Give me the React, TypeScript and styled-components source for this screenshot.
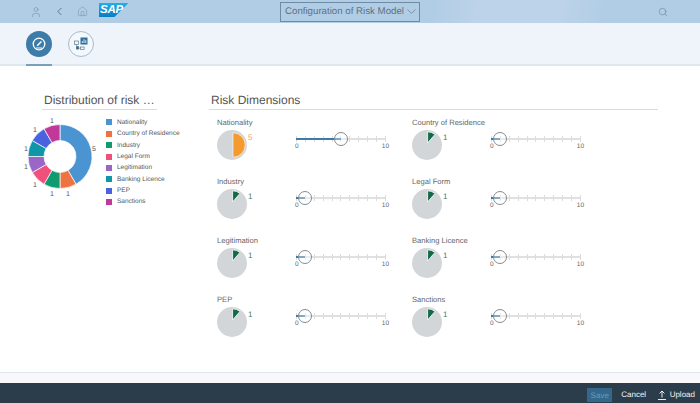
import React from "react";
import styled, { createGlobalStyle } from "styled-components";
import { ChevronDown, ChevronLeft, Home, Search, User } from "lucide-react";

const GlobalStyle = createGlobalStyle`
  html, body { margin: 0; padding: 0; background: #fff; }
  body {
    font-family: "Liberation Sans", Arial, sans-serif;
    text-rendering: geometricPrecision;
  }
`;

const legend = [
  { name: "Nationality", color: "#4a94d2", value: 5 },
  { name: "Country of Residence", color: "#ee7340", value: 1 },
  { name: "Industry", color: "#0f9a70", value: 1 },
  { name: "Legal Form", color: "#f0507c", value: 1 },
  { name: "Legitimation", color: "#9a66c8", value: 1 },
  { name: "Banking Licence", color: "#0f97a8", value: 1 },
  { name: "PEP", color: "#4a62e0", value: 1 },
  { name: "Sanctions", color: "#c0399a", value: 1 },
];

const donutLabels = [
  { x: 74, y: 62.5, t: "5" },
  { x: 48, y: 107.5, t: "1" },
  { x: 32, y: 107.5, t: "1" },
  { x: 15, y: 98.5, t: "1" },
  { x: 6, y: 80.5, t: "1" },
  { x: 6, y: 62.5, t: "1" },
  { x: 15, y: 43.5, t: "1" },
  { x: 32, y: 34.5, t: "1" },
];

const dimensions = [
  { name: "Nationality", value: 5 },
  { name: "Country of Residence", value: 1 },
  { name: "Industry", value: 1 },
  { name: "Legal Form", value: 1 },
  { name: "Legitimation", value: 1 },
  { name: "Banking Licence", value: 1 },
  { name: "PEP", value: 1 },
  { name: "Sanctions", value: 1 },
];

const polar = (cx: number, cy: number, r: number, deg: number) => {
  const a = ((deg - 90) * Math.PI) / 180;
  return [cx + r * Math.cos(a), cy + r * Math.sin(a)];
};

const ringPath = (cx: number, cy: number, R: number, r: number, from: number, to: number) => {
  const [x1, y1] = polar(cx, cy, R, from);
  const [x2, y2] = polar(cx, cy, R, to);
  const [x3, y3] = polar(cx, cy, r, to);
  const [x4, y4] = polar(cx, cy, r, from);
  const large = to - from > 180 ? 1 : 0;
  return `M${x1} ${y1}A${R} ${R} 0 ${large} 1 ${x2} ${y2}L${x3} ${y3}A${r} ${r} 0 ${large} 0 ${x4} ${y4}Z`;
};

const Donut = () => {
  let angle = 0;
  return (
    <DonutSvg viewBox="0 0 80 110">
      {legend.map((l) => {
        const from = angle;
        angle += (l.value / 12) * 360;
        return (
          <path
            key={l.name}
            d={ringPath(40, 68.5, 32, 16, from, angle)}
            fill={l.color}
            stroke="#fff"
            strokeWidth="0.7"
          />
        );
      })}
      {donutLabels.map((d, i) => (
        <text key={i} x={d.x} y={d.y} fontSize="7" fill="#555" textAnchor="middle" fontFamily="Liberation Sans">
          {d.t}
        </text>
      ))}
    </DonutSvg>
  );
};

const ScorePie = ({ value }: { value: number }) => (
  <svg width="30" height="30" viewBox="0 0 30 30">
    <circle cx="15" cy="15" r="15" fill="#d2d6d8" />
    {value === 5 ? (
      <path d="M16 2.8A12.2 12.2 0 0 1 16 27.2Z" fill="#f59a2e" stroke="#fff" strokeWidth="0.6" />
    ) : (
      <path d="M15.6 13V1.8A11.4 11.4 0 0 1 23 4.4Z" fill="#14694a" stroke="#fff" strokeWidth="0.8" />
    )}
  </svg>
);

const Slider = ({ value }: { value: number }) => (
  <SliderBox>
    <Track>
      {Array.from({ length: 11 }).map((_, i) => (
        <Tick key={i} />
      ))}
      <Fill style={{ width: `${value * 10}%` }} />
      <Handle style={{ left: `${value * 10}%` }} />
    </Track>
    <Scale>
      <span>0</span>
      <span>10</span>
    </Scale>
  </SliderBox>
);

export default function App() {
  return (
    <Page>
      <GlobalStyle />
      <Header>
        <HeaderLeft>
          <HeaderIcon><User size={12} strokeWidth={1.2} /></HeaderIcon>
          <BackIcon><ChevronLeft size={13} strokeWidth={1.4} /></BackIcon>
          <HeaderIcon><Home size={11} strokeWidth={1.2} /></HeaderIcon>
          <Logo>
            <svg width="30" height="14" viewBox="0 0 30 14">
              <defs>
                <linearGradient id="sap" x1="0" y1="0" x2="0" y2="1">
                  <stop offset="0" stopColor="#1fb0ea" />
                  <stop offset="1" stopColor="#0a7cc4" />
                </linearGradient>
              </defs>
              <path d="M0 0H29.5L15.5 14H0Z" fill="url(#sap)" />
            </svg>
            <LogoText>SAP</LogoText>
          </Logo>
        </HeaderLeft>
        <TitleBox>
          Configuration of Risk Model
          <ChevronDown size={15} strokeWidth={1} />
        </TitleBox>
        <HeaderRight>
          <HeaderIcon><Search size={10} strokeWidth={1.3} /></HeaderIcon>
        </HeaderRight>
      </Header>

      <TabBar>
        <Tab $active>
          <TabCircle $active>
            <svg width="14" height="14" viewBox="0 0 14 14" fill="none" stroke="#fff">
              <circle cx="7" cy="7" r="5.8" strokeWidth="1.3" />
              <path d="M5.2 8.8L9.4 4.4" strokeWidth="1.5" />
              <path d="M4 11h6" strokeWidth="1" />
            </svg>
          </TabCircle>
        </Tab>
        <Tab>
          <TabCircle>
            <svg width="14" height="14" viewBox="0 0 14 14">
              <rect x="6.5" y="0.5" width="7" height="7" fill="#2f6f9e" />
              <path d="M8.3 6V4M10 6V2.2M11.8 6V3.2" stroke="#fff" strokeWidth="0.8" />
              <rect x="0.5" y="4" width="4" height="3.5" fill="none" stroke="#5b7d94" strokeWidth="0.7" />
              <rect x="2.2" y="9.2" width="2.6" height="3.2" fill="#3c5f78" />
              <rect x="6.5" y="10" width="3.6" height="2.6" fill="none" stroke="#5b7d94" strokeWidth="0.7" />
              <path d="M2.5 7.5v2M5 11.2h1.5" stroke="#5b7d94" strokeWidth="0.6" />
            </svg>
          </TabCircle>
        </Tab>
      </TabBar>

      <Content>
        <ChartPanel>
          <ChartTitle>Distribution of risk …</ChartTitle>
          <ChartBody>
            <Donut />
            <Legend>
              {legend.map((l) => (
                <LegendRow key={l.name}>
                  <Swatch $color={l.color} />
                  {l.name}
                </LegendRow>
              ))}
            </Legend>
          </ChartBody>
        </ChartPanel>

        <DimensionPanel>
          <PanelTitle>Risk Dimensions</PanelTitle>
          <DimensionGrid>
            {dimensions.map((d) => (
              <Dimension key={d.name}>
                <DimensionName>{d.name}</DimensionName>
                <DimensionRow>
                  <PieBox>
                    <ScorePie value={d.value} />
                    <Score $high={d.value > 1}>{d.value}</Score>
                  </PieBox>
                  <Slider value={d.value} />
                </DimensionRow>
              </Dimension>
            ))}
          </DimensionGrid>
        </DimensionPanel>
      </Content>

      <Strip />
      <Footer>
        <SaveButton>Save</SaveButton>
        <FooterButton>Cancel</FooterButton>
        <FooterButton>
          <svg width="8" height="10" viewBox="0 0 8 10" fill="none" stroke="#fff" strokeWidth="0.9">
            <path d="M4 7.5V1M1.6 3.4L4 1l2.4 2.4M0 9.5h8" />
          </svg>
          Upload
        </FooterButton>
      </Footer>
    </Page>
  );
}

const Page = styled.div`
  width: 700px;
  height: 403px;
  display: flex;
  flex-direction: column;
  overflow: hidden;
  background: #fff;
`;

const Header = styled.header`
  height: 23px;
  flex: none;
  display: grid;
  grid-template-columns: 1fr 140px 1fr;
  align-items: center;
  background: linear-gradient(100deg, #b1cde5 0%, #b1cde5 62%, #bcd3e9 68%, #bcd3e9 80%, #b1cde5 86%, #b1cde5 100%);
`;

const HeaderLeft = styled.div`
  display: flex;
  align-items: center;
  padding-left: 30px;
`;

const HeaderRight = styled.div`
  display: flex;
  justify-content: flex-end;
  padding-right: 32px;
`;

const HeaderIcon = styled.span`
  display: flex;
  color: #768fa5;
  margin-right: 11px;

  ${HeaderRight} & {
    margin-right: 0;
    color: #64798c;
  }
`;

const BackIcon = styled.span`
  display: flex;
  color: #3f5b72;
  margin-right: 11px;
`;

const Logo = styled.div`
  position: relative;
  width: 30px;
  height: 14px;
  flex: none;
  margin-top: -3px;

  svg {
    display: block;
  }
`;

const LogoText = styled.span`
  position: absolute;
  left: 1px;
  top: 1px;
  font-size: 11.5px;
  line-height: 13px;
  font-weight: 700;
  font-style: italic;
  color: #fff;
  letter-spacing: -0.2px;
`;

const TitleBox = styled.div`
  height: 20px;
  box-sizing: border-box;
  display: flex;
  align-items: center;
  justify-content: space-between;
  padding: 0 1px 0 4px;
  border: 1px solid #6f8ba3;
  font-size: 9.7px;
  color: #5c7284;
  white-space: nowrap;

  svg {
    flex: none;
    color: #5c7284;
  }
`;

const TabBar = styled.nav`
  height: 43px;
  flex: none;
  box-sizing: border-box;
  display: flex;
  gap: 16px;
  padding-left: 26px;
  background: #eff3fa;
  border-bottom: 2px solid #dfe7f1;
`;

const Tab = styled.div<{ $active?: boolean }>`
  width: 26px;
  height: 43px;
  box-sizing: border-box;
  padding-top: 8px;
  border-bottom: 2px solid ${(p) => (p.$active ? "#7ba1b8" : "transparent")};
`;

const TabCircle = styled.div<{ $active?: boolean }>`
  width: 26px;
  height: 26px;
  box-sizing: border-box;
  border-radius: 50%;
  display: flex;
  align-items: center;
  justify-content: center;
  background: ${(p) => (p.$active ? "#3d7ba8" : "#f4f7fb")};
  border: ${(p) => (p.$active ? "none" : "1px solid #a7bccb")};
`;

const Content = styled.main`
  flex: 1;
  display: flex;
  padding: 27px 42px 0 20px;
  border-bottom: 1px solid #dfe5ec;
`;

const ChartPanel = styled.section`
  width: 137px;
  flex: none;
`;

const ChartTitle = styled.h2`
  margin: 0 0 0 22px;
  height: 16px;
  font-size: 12px;
  line-height: 15px;
  font-weight: 400;
  color: #555;
  border-bottom: 1px solid #dcdcdc;
  white-space: nowrap;
  padding-left: 2px;
`;

const ChartBody = styled.div`
  display: flex;
  margin-top: -22px;
`;

const DonutSvg = styled.svg`
  width: 80px;
  height: 110px;
  flex: none;
`;

const Legend = styled.div`
  margin: 28.8px 0 0 6px;
  display: flex;
  flex-direction: column;
  flex: none;
`;

const LegendRow = styled.div`
  height: 11.35px;
  display: flex;
  align-items: center;
  gap: 5px;
  font-size: 6.5px;
  color: #555;
  white-space: nowrap;
`;

const Swatch = styled.span<{ $color: string }>`
  width: 6px;
  height: 6px;
  flex: none;
  background: ${(p) => p.$color};
`;

const DimensionPanel = styled.section`
  flex: 1;
  margin-left: 52px;
`;

const PanelTitle = styled.h2`
  margin: 0;
  height: 16px;
  padding-left: 2px;
  font-size: 12px;
  line-height: 15px;
  font-weight: 400;
  color: #555;
  border-bottom: 1px solid #dcdcdc;
`;

const DimensionGrid = styled.div`
  display: grid;
  grid-template-columns: 195px 1fr;
  grid-auto-rows: 59px;
  padding: 7px 0 0 8px;
`;

const Dimension = styled.div`
  display: flex;
  flex-direction: column;
`;

const DimensionName = styled.div`
  height: 12px;
  font-size: 7.6px;
  line-height: 12px;
  color: #666;
  white-space: nowrap;
`;

const DimensionRow = styled.div`
  display: flex;
  margin-top: 0.5px;
`;

const PieBox = styled.div`
  width: 79px;
  display: flex;
  align-items: flex-start;
`;

const Score = styled.span<{ $high?: boolean }>`
  font-size: 8px;
  line-height: 9px;
  margin: 3.5px 0 0 1px;
  color: ${(p) => (p.$high ? "#eea44e" : "#3f7a68")};
`;

const SliderBox = styled.div`
  width: 90px;
  padding-top: 5.5px;
`;

const Track = styled.div`
  position: relative;
  height: 7px;
  display: flex;
  justify-content: space-between;
  align-items: center;

  &::before {
    content: "";
    position: absolute;
    left: 0;
    right: 0;
    top: 2.5px;
    height: 2px;
    background: #e0e0e0;
  }
`;

const Tick = styled.span`
  position: relative;
  width: 1px;
  height: 6px;
  background: #dcdcdc;
`;

const Fill = styled.span`
  position: absolute;
  left: 0;
  top: 2.5px;
  height: 2px;
  background: #3f7ba8;
`;

const Handle = styled.span`
  position: absolute;
  top: -3.5px;
  width: 14px;
  height: 14px;
  box-sizing: border-box;
  margin-left: -7px;
  border: 1.3px solid #858b8f;
  border-radius: 50%;
  background: rgba(255, 255, 255, 0.35);
`;

const Scale = styled.div`
  display: flex;
  justify-content: space-between;
  margin: 1px -3px 0 -1px;
  font-size: 6.5px;
  line-height: 8px;
  color: #666;
`;

const Strip = styled.div`
  height: 10px;
  flex: none;
  background: #f8f8fa;
`;

const Footer = styled.footer`
  height: 20px;
  flex: none;
  display: flex;
  align-items: center;
  justify-content: flex-end;
  gap: 9px;
  padding-right: 5px;
  background: #2b3d4b;
`;

const SaveButton = styled.div`
  width: 25px;
  height: 14px;
  margin-top: 4px;
  display: flex;
  align-items: center;
  justify-content: center;
  background: #33678b;
  color: #7298b0;
  font-size: 8px;
`;

const FooterButton = styled.div`
  display: flex;
  align-items: center;
  gap: 4px;
  margin-top: 3px;
  font-size: 8px;
  color: #f2f4f6;

  & + & {
    margin-left: 2.5px;
  }
`;
